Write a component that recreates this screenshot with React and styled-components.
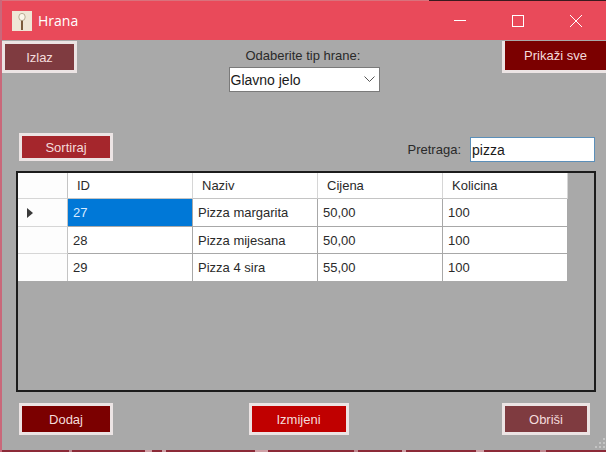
import React from 'react';
import styled, { createGlobalStyle } from 'styled-components';

const GlobalStyle = createGlobalStyle`
  html, body {
    margin: 0;
    padding: 0;
    background: #a9a9a9;
  }
  * {
    box-sizing: border-box;
  }
`;

const Win = styled.div`
  position: relative;
  width: 606px;
  height: 452px;
  overflow: hidden;
  display: flex;
  flex-direction: column;
  background: #a9a9a9;
  border-left: 2px solid #c9687a;
  font-family: "Liberation Sans", Arial, sans-serif;
  font-size: 13px;
  color: #2a2a2a;
`;

const TopEdge = styled.div`
  flex: none;
  height: 1px;
  background: linear-gradient(to right, #d9727c 427px, #3a1a1e 427px);
`;

const BottomEdge = styled.div`
  flex: none;
  height: 2px;
  background: linear-gradient(
    to right,
    #8c2a38 67px, #c08890 67px, #c08890 70px, #8c2a38 70px,
    #8c2a38 143px, #d0a0a6 143px, #d0a0a6 150px, #8c2a38 150px,
    #8c2a38 160px, #d0a0a6 160px, #d0a0a6 164px, #8c2a38 164px,
    #8c2a38 253px, #d0a0a6 253px, #d0a0a6 266px, #8c2a38 266px,
    #8c2a38 352px, #c08890 352px, #c08890 356px, #8c2a38 356px,
    #8c2a38 400px, #d0a0a6 400px, #d0a0a6 404px, #8c2a38 404px,
    #8c2a38 474px, #d0a0a6 474px, #d0a0a6 482px, #8c2a38 482px,
    #8c2a38 538px, #c08890 538px, #c08890 544px, #8c2a38 544px
  );
`;

const TitleBar = styled.div`
  flex: none;
  height: 39px;
  display: flex;
  align-items: center;
  background: #e94a5a;
  padding-left: 10px;
`;

const TitleText = styled.span`
  margin-left: 6px;
  font-family: "Open Sans", sans-serif;
  font-size: 14px;
  color: #fff;
`;

const AppIcon = styled.svg`
  width: 20px;
  height: 20px;
  display: block;
`;

const WinControls = styled.div`
  margin-left: auto;
  display: flex;
  height: 100%;
  padding-right: 1px;
`;

const WinBtn = styled.div`
  width: 58px;
  display: flex;
  align-items: center;
  justify-content: center;
`;

const Content = styled.div`
  flex: 1;
  display: flex;
  flex-direction: column;
  min-height: 0;
`;

const TopRow = styled.div`
  display: grid;
  grid-template-columns: 1fr 151px 1fr;
  align-items: start;
  height: 93px;
  padding-top: 1px;
`;

const Btn = styled.div`
  width: ${(p) => p.$w}px;
  height: ${(p) => p.$h || 32}px;
  display: flex;
  align-items: center;
  justify-content: center;
  background: ${(p) => p.$bg};
  border: 3px solid #ece4e4;
  color: #f4dcdc;
  font-size: 13px;
`;

const EdgeBtn = styled(Btn)`
  justify-self: end;
  border-top: 0;
  border-right: 0;
`;

const TypeBox = styled.div`
  margin-top: 7px;
  display: flex;
  flex-direction: column;
  gap: 3px;
`;

const TypeLabel = styled.div`
  white-space: nowrap;
  line-height: 16px;
  padding-left: 17px;
`;

const Select = styled.div`
  height: 25px;
  background: #fff;
  border: 1px solid #7a7a7a;
  display: flex;
  align-items: center;
  justify-content: space-between;
  padding: 0 4px 0 1px;
  font-size: 14px;
  color: #1a1a1a;
`;

const ToolRow = styled.div`
  display: flex;
  justify-content: space-between;
  align-items: flex-start;
  height: 28px;
  padding: 0 11px 0 17px;
`;

const Search = styled.div`
  display: flex;
  align-items: center;
  gap: 9px;
  margin-top: 4px;
`;

const SearchInput = styled.div`
  width: 125px;
  height: 25px;
  background: #fff;
  border: 1px solid #5b8fb9;
  display: flex;
  align-items: center;
  padding-left: 1px;
  font-size: 14px;
  color: #1a1a1a;
`;

const GridBox = styled.div`
  margin: 10px 10px 0 14px;
  height: 221px;
  border: 2px solid #1c1c1c;
`;

const Table = styled.div`
  display: grid;
  grid-template-columns: 50px repeat(4, 125px);
  grid-auto-rows: min-content;
`;

const Cell = styled.div`
  height: ${(p) => p.$h}px;
  display: flex;
  align-items: center;
  padding-left: ${(p) => (p.$head ? 9 : 5)}px;
  background: ${(p) => (p.$active ? '#0078d7' : '#fff')};
  color: ${(p) => (p.$active ? '#d8ebff' : '#2a2a2a')};
  border-right: 1px solid ${(p) => (p.$head ? '#d6d6d6' : '#a8a8a8')};
  border-bottom: ${(p) => (p.$last ? 0 : 1)}px solid ${(p) => (p.$head ? '#c4c4c4' : '#a8a8a8')};
`;

const RowHead = styled(Cell)`
  padding-left: 9px;
  background: #fdfdfd;
  border-right: 1px solid #c4c4c4;
  border-bottom-color: #d6d6d6;
`;

const Arrow = styled.span`
  width: 0;
  height: 0;
  border-left: 6px solid #3a3a3a;
  border-top: 5px solid transparent;
  border-bottom: 5px solid transparent;
`;

const Footer = styled.div`
  display: flex;
  justify-content: space-between;
  padding: 11px 16px 0 17px;
`;

const MiddleBtn = styled(Btn)`
  margin-right: 18px;
`;

const Grip = styled.svg`
  position: absolute;
  right: 1px;
  bottom: 4px;
  width: 10px;
  height: 10px;
`;

const columns = ['ID', 'Naziv', 'Cijena', 'Kolicina'];
const rows = [
  ['27', 'Pizza margarita', '50,00', '100'],
  ['28', 'Pizza mijesana', '50,00', '100'],
  ['29', 'Pizza 4 sira', '55,00', '100'],
];
const rowHeights = [28, 27, 27];
const gripDots = [[8, 0], [4, 4], [8, 4], [0, 8], [4, 8], [8, 8]];

export default function App() {
  return (
    <Win>
      <GlobalStyle />
      <TopEdge />
      <TitleBar>
        <AppIcon viewBox="0 0 20 20">
          <rect width="20" height="20" fill="#efe6d6" />
          <rect x="9" y="8" width="2" height="11" fill="#7a5a3c" />
          <ellipse cx="10" cy="6" rx="3.2" ry="3.6" fill="#fbf6ea" stroke="#a89a80" strokeWidth="0.8" />
        </AppIcon>
        <TitleText>Hrana</TitleText>
        <WinControls>
          <WinBtn>
            <svg width="12" height="12" viewBox="0 0 12 12">
              <path d="M0 5.5h12" stroke="#fff" fill="none" />
            </svg>
          </WinBtn>
          <WinBtn>
            <svg width="12" height="12" viewBox="0 0 12 12">
              <rect x="0.5" y="0.5" width="11" height="11" stroke="#fff" fill="none" />
            </svg>
          </WinBtn>
          <WinBtn>
            <svg width="12" height="12" viewBox="0 0 12 12">
              <path d="M0 0l12 12M12 0L0 12" stroke="#fff" fill="none" />
            </svg>
          </WinBtn>
        </WinControls>
      </TitleBar>
      <Content>
        <TopRow>
          <Btn $w={75} $bg="#7f3b40">Izlaz</Btn>
          <TypeBox>
            <TypeLabel>Odaberite tip hrane:</TypeLabel>
            <Select>
              <span>Glavno jelo</span>
              <svg width="11" height="7" viewBox="0 0 11 7">
                <path d="M0.5 0.5l5 5 5-5" stroke="#555" fill="none" />
              </svg>
            </Select>
          </TypeBox>
          <EdgeBtn $w={104} $bg="#7b0000">Prikaži sve</EdgeBtn>
        </TopRow>
        <ToolRow>
          <Btn $w={94} $h={28} $bg="#a5262c">Sortiraj</Btn>
          <Search>
            <span>Pretraga:</span>
            <SearchInput>pizza</SearchInput>
          </Search>
        </ToolRow>
        <GridBox>
          <Table>
            <RowHead $h={26} />
            {columns.map((c) => (
              <Cell key={c} $h={26} $head>{c}</Cell>
            ))}
            {rows.map((row, i) => (
              <React.Fragment key={row[0]}>
                <RowHead $h={rowHeights[i]} $last={i === 2}>{i === 0 && <Arrow />}</RowHead>
                {row.map((v, j) => (
                  <Cell key={j} $h={rowHeights[i]} $last={i === 2} $active={i === 0 && j === 0}>{v}</Cell>
                ))}
              </React.Fragment>
            ))}
          </Table>
        </GridBox>
        <Footer>
          <Btn $w={94} $bg="#7b0000">Dodaj</Btn>
          <MiddleBtn $w={100} $bg="#c00000">Izmijeni</MiddleBtn>
          <Btn $w={88} $bg="#7f3b40">Obriši</Btn>
        </Footer>
      </Content>
      <BottomEdge />
      <Grip viewBox="0 0 10 10">
        {gripDots.map(([x, y]) => (
          <rect key={`${x}-${y}`} x={x} y={y} width="2" height="2" fill="#c4c4c4" />
        ))}
      </Grip>
    </Win>
  );
}
